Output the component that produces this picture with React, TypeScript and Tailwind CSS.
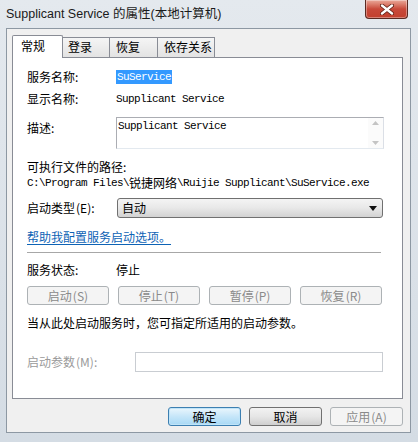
const cjk = "font-['Noto_Sans_CJK_SC',sans-serif]";

// accelerator keys are hidden until Alt is pressed, so no underline
function Key({ text, k }: { text: string; k: string }) {
  return (
    <span>
      {text}
      <span className="ml-[1px]">({k})</span>
    </span>
  );
}

function WinButton({
  children,
  disabled,
  primary,
  className = "",
}: {
  children: React.ReactNode;
  disabled?: boolean;
  primary?: boolean;
  className?: string;
}) {
  let look =
    "border-[#707070] bg-linear-to-b from-[#f2f2f2] via-[#e6e6e6] to-[#cfcfcf] text-black";
  if (disabled) look = "border-[#adb2b5] bg-[#f4f4f4] text-[#8a8a8a]";
  if (primary)
    look =
      "border-[#3c7fb1] bg-linear-to-b from-[#eaf6fd] via-[#c6e6f9] to-[#a7d9f5] text-black shadow-[inset_0_0_0_1px_#c0e4f8]";
  return (
    <div
      className={`h-[19px] flex items-center justify-center rounded-[3px] border leading-none text-[12px] ${look} ${className}`}
    >
      {children}
    </div>
  );
}

export default function App() {
  return (
    <div
      className={`relative w-[418px] h-[442px] overflow-hidden bg-linear-to-b from-[#e4e9ee] to-[#d4dce4] text-[12px] text-black ${cjk}`}
    >
      {/* title bar */}
      <div className="h-[28px] flex items-center pl-[6px]">
        <span className="font-['Liberation_Sans','Noto_Sans_CJK_SC',sans-serif] text-[12.5px] leading-none text-[#1a1a1a]">
          Supplicant Service 的属性(本地计算机)
        </span>
      </div>
      <div className="absolute right-[10px] top-0 w-[43px] h-[19px] rounded-b-[4px] border border-t-0 border-[#5a2a22] bg-linear-to-b from-[#e9a99a] via-[#c8493a] to-[#c2402e] shadow-[inset_0_0_0_1px_rgba(255,255,255,0.35)] flex items-center justify-center">
        <svg width="14" height="11" viewBox="0 0 14 11">
          <path d="M2 1.5 L12 9.5 M12 1.5 L2 9.5" stroke="#5b1d12" strokeWidth="4" strokeLinecap="round" />
          <path d="M2 1.5 L12 9.5 M12 1.5 L2 9.5" stroke="#ffffff" strokeWidth="2.4" strokeLinecap="round" />
        </svg>
      </div>

      {/* client area */}
      <div className="ml-[6px] w-[405px] h-[405px] border border-[#8d98a3] bg-[#f0f0f0] pl-[5px] pt-[6px]">
        {/* tabs */}
        <div className="flex items-end h-[22px]">
          <div className="relative z-10 -mb-px w-[51px] h-[23px] border border-b-0 border-[#898c95] bg-white rounded-t-[2px] pl-[8px] pt-[2px] leading-[16px]">
            常规
          </div>
          <div className="-ml-px w-[48px] h-[20px] border border-b-0 border-[#898c95] bg-linear-to-b from-[#f5f5f5] to-[#e3e3e3] pl-[5px] pt-[1px] leading-[16px]">
            登录
          </div>
          <div className="-ml-px w-[49px] h-[20px] border border-b-0 border-[#898c95] bg-linear-to-b from-[#f5f5f5] to-[#e3e3e3] pl-[6px] pt-[1px] leading-[16px]">
            恢复
          </div>
          <div className="-ml-px w-[58px] h-[20px] border border-b-0 border-[#898c95] bg-linear-to-b from-[#f5f5f5] to-[#e3e3e3] pl-[6px] pt-[1px] leading-[16px]">
            依存关系
          </div>
        </div>

        {/* tab page */}
        <div className="w-[391px] h-[342px] border border-[#898c95] bg-white pl-[14px]">
          <div className="mt-[10px] h-[18px] flex items-center">
            <div className="w-[89px] leading-[16px]">服务名称:</div>
            <span className="font-['Liberation_Mono',monospace] text-[11px] tracking-[-0.6px] leading-[14px] bg-[#3399ff] text-white px-[1px]">
              SuService
            </span>
          </div>
          <div className="mt-[4px] h-[18px] flex items-center">
            <div className="w-[89px] leading-[16px]">显示名称:</div>
            <span className="font-['Liberation_Mono',monospace] text-[11px] tracking-[-0.6px] leading-[14px]">
              Supplicant Service
            </span>
          </div>
          <div className="mt-[9px] h-[32px] flex items-start">
            <div className="w-[89px] leading-[16px] pt-[3px]">描述:</div>
            <div className="w-[268px] h-[32px] flex border border-[#abadb3] border-r-[#dbdfe6] border-b-[#e3e9ef] bg-white">
              <div className="flex-1 pl-[1px] pt-[1px] font-['Liberation_Mono',monospace] text-[11px] tracking-[-0.6px] leading-[14px]">
                Supplicant Service
              </div>
              <div className="w-[15px] flex flex-col items-center justify-between py-[3px] bg-[#fbfbfb]">
                <svg width="7" height="4" viewBox="0 0 7 4">
                  <path d="M0 4 L3.5 0 L7 4 Z" fill="#c4c4c4" />
                </svg>
                <svg width="7" height="4" viewBox="0 0 7 4">
                  <path d="M0 0 L3.5 4 L7 0 Z" fill="#c4c4c4" />
                </svg>
              </div>
            </div>
          </div>
          <div className="mt-[10px] h-[16px] leading-[16px]">可执行文件的路径:</div>
          <div className="h-[16px] flex items-center font-['Liberation_Mono','Noto_Sans_CJK_SC',monospace] text-[11px] tracking-[-0.6px] leading-[16px] whitespace-pre">
            {"C:\\Program Files\\"}
            <span className={`${cjk} text-[12px] tracking-normal`}>锐捷网络</span>
            {"\\Ruijie Supplicant\\SuService.exe"}
          </div>
          <div className="mt-[7px] h-[20px] flex items-center">
            <div className="w-[90px] leading-[16px]">
              <Key text="启动类型" k="E" />:
            </div>
            <div className="w-[266px] h-[20px] flex items-center justify-between rounded-[3px] border border-[#707070] bg-linear-to-b from-[#f4f4f4] via-[#e8e8e8] to-[#d2d2d2] pl-[4px] pr-[5px]">
              <span className="leading-[16px]">自动</span>
              <svg width="8" height="5" viewBox="0 0 8 5">
                <path d="M0 0 L8 0 L4 5 Z" fill="#111" />
              </svg>
            </div>
          </div>
          <div className="mt-[11px] h-[16px] leading-[16px] text-[#0e63b5] underline underline-offset-2">
            帮助我配置服务启动选项。
          </div>
          <div className="mt-[7px] w-[354px] h-px bg-[#a7a7a7]" />
          <div className="mt-[9px] h-[16px] flex items-center">
            <div className="w-[89px] leading-[16px]">服务状态:</div>
            <span className="leading-[16px]">停止</span>
          </div>
          <div className="mt-[8px] flex gap-[9px]">
            <WinButton disabled className="w-[82px]">
              <Key text="启动" k="S" />
            </WinButton>
            <WinButton disabled className="w-[82px]">
              <Key text="停止" k="T" />
            </WinButton>
            <WinButton disabled className="w-[82px]">
              <Key text="暂停" k="P" />
            </WinButton>
            <WinButton disabled className="w-[82px]">
              <Key text="恢复" k="R" />
            </WinButton>
          </div>
          <div className="mt-[10px] h-[16px] leading-[16px]">
            当从此处启动服务时，您可指定所适用的启动参数。
          </div>
          <div className="mt-[21px] h-[20px] flex items-center">
            <div className="w-[108px] leading-[16px] text-[#9a9a9a]">
              <Key text="启动参数" k="M" />:
            </div>
            <div className="w-[248px] h-[20px] border border-[#c9cdd2] bg-white" />
          </div>
        </div>

        {/* dialog buttons */}
        <div className="mt-[8px] w-[391px] flex justify-end gap-[8px]">
          <WinButton primary className="w-[73px]">
            确定
          </WinButton>
          <WinButton className="w-[73px]">取消</WinButton>
          <WinButton disabled className="w-[73px]">
            <Key text="应用" k="A" />
          </WinButton>
        </div>
      </div>
    </div>
  );
}
